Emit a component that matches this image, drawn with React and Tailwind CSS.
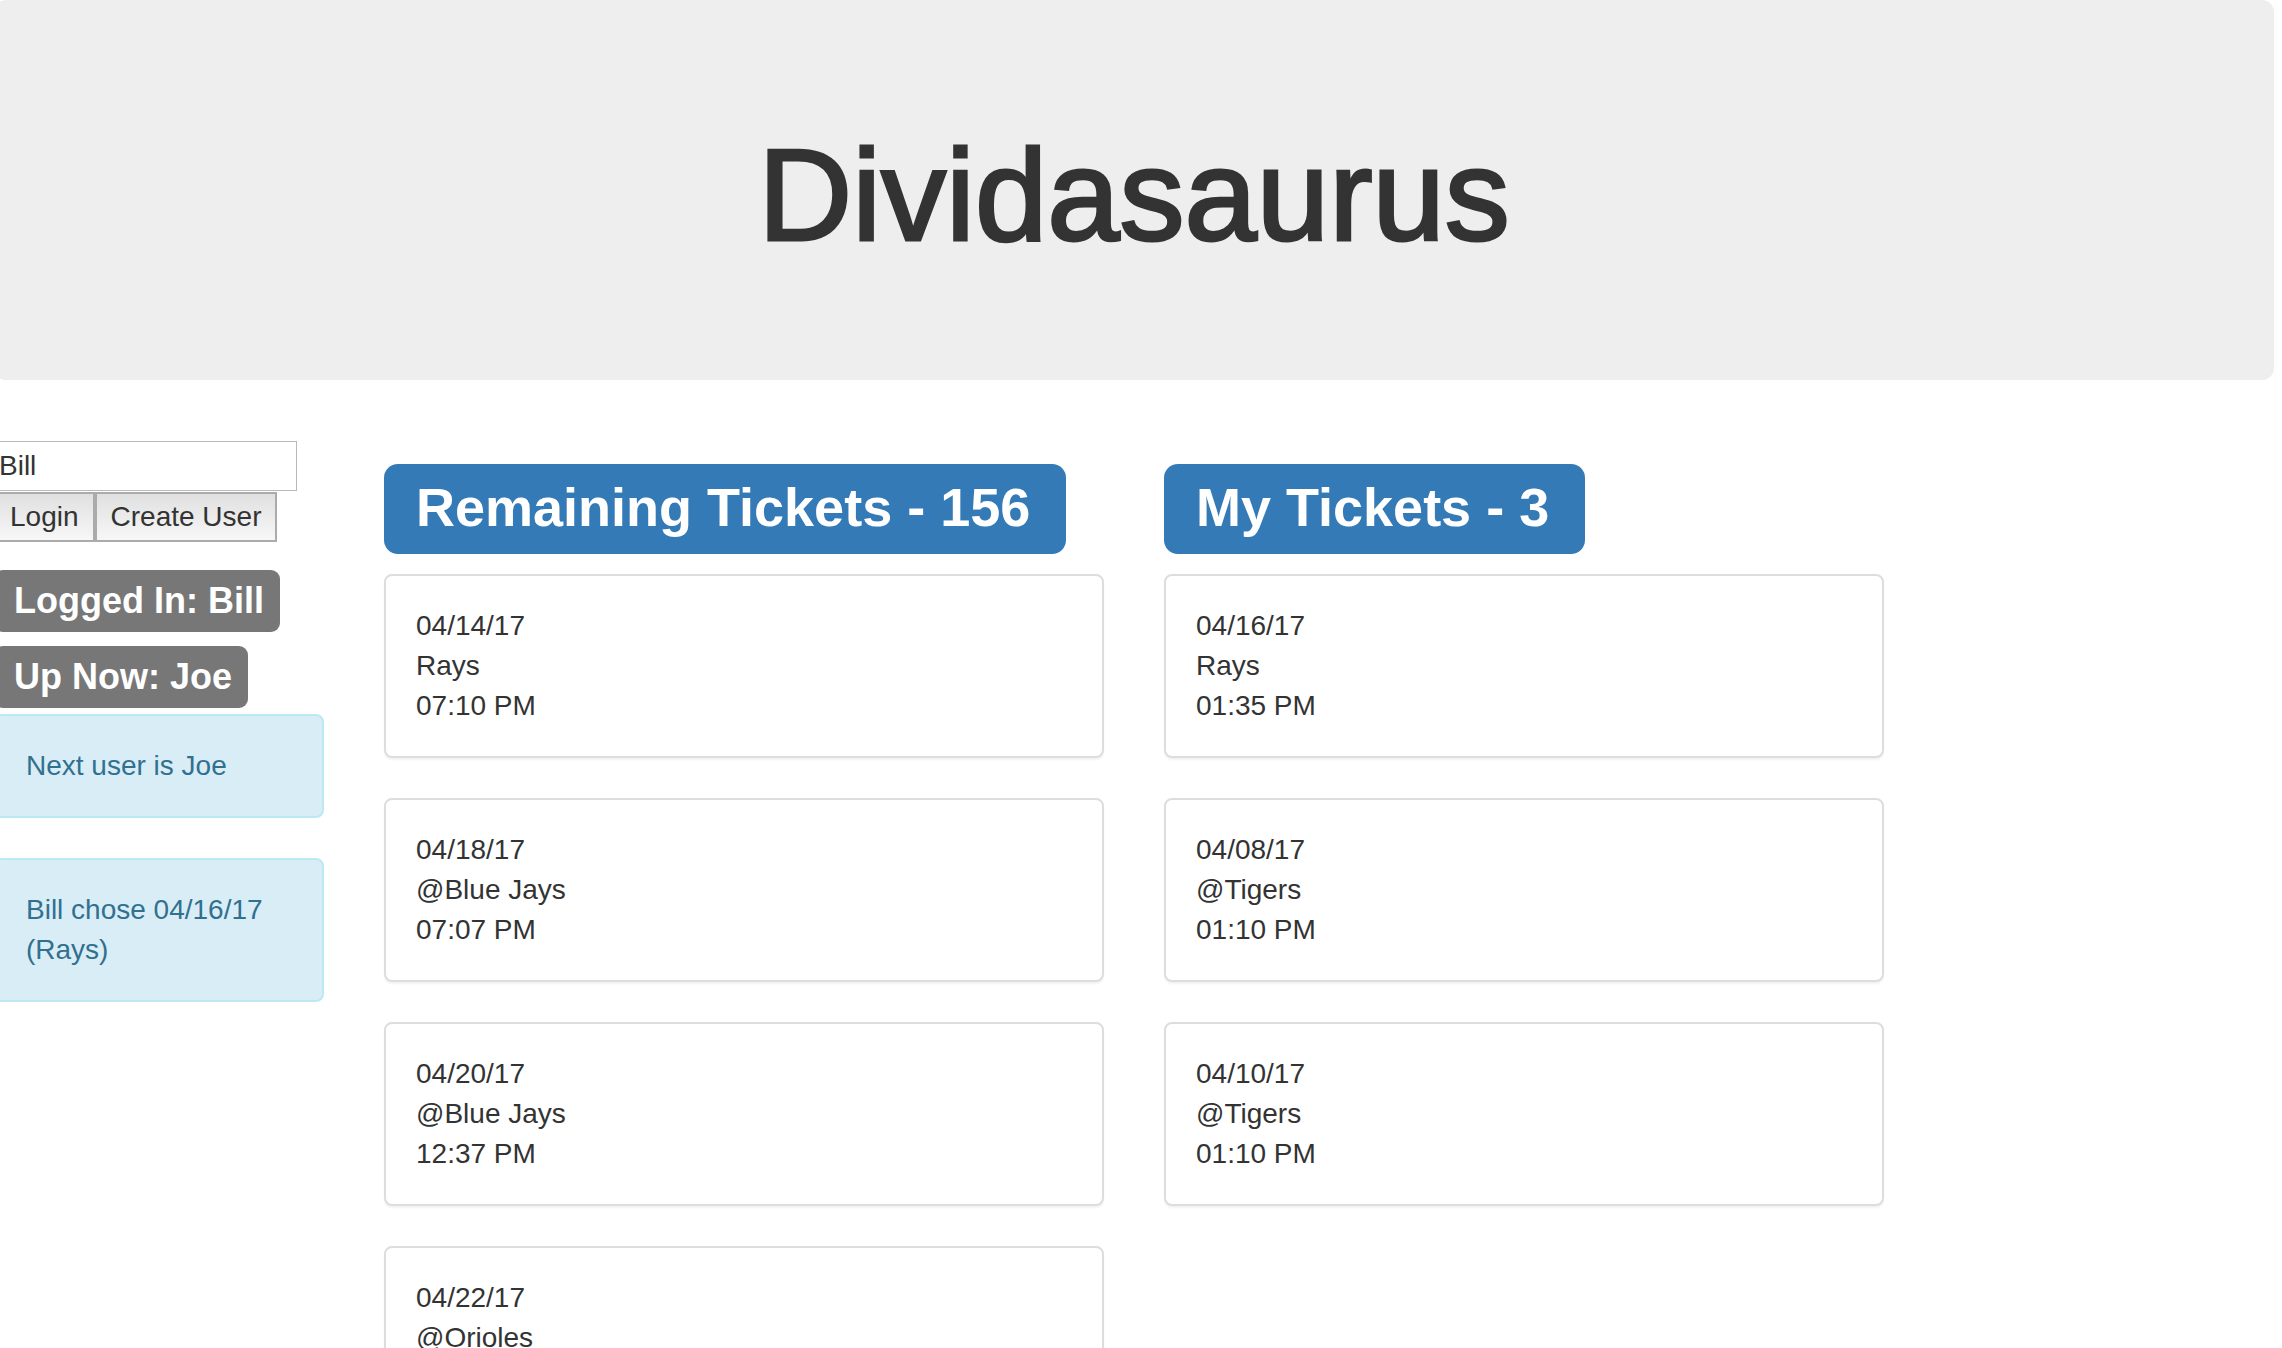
const remaining = [
  ['04/14/17', 'Rays', '07:10 PM'],
  ['04/18/17', '@Blue Jays', '07:07 PM'],
  ['04/20/17', '@Blue Jays', '12:37 PM'],
  ['04/22/17', '@Orioles'],
];

const mine = [
  ['04/16/17', 'Rays', '01:35 PM'],
  ['04/08/17', '@Tigers', '01:10 PM'],
  ['04/10/17', '@Tigers', '01:10 PM'],
];

const buttonClass =
  'h-[50px] border-2 border-[#ababab] bg-linear-to-b from-[#e0e0e0] to-[#f7f7f7] px-3.5 leading-[46px]';

function Status({ children }) {
  return (
    <h3 className="w-fit rounded-[9px] bg-[#777777] pr-4 pl-5 text-[36px] leading-[62px] font-bold whitespace-nowrap text-white">
      {children}
    </h3>
  );
}

function Notice({ children }) {
  return (
    <div className="rounded-lg border-2 border-[#bce8f1] bg-[#d9edf7] p-[30px] text-[#31708f]">
      {children}
    </div>
  );
}

function TicketColumn({ title, count, tickets }) {
  return (
    <section className="col-span-4 px-[30px] pt-[24px]">
      <h2 className="w-fit rounded-[14px] bg-[#337ab7] pr-9 pb-1 pl-8 text-[54px] leading-[86px] font-bold whitespace-nowrap text-white">
        {title} - {count}
      </h2>
      <ul className="mt-5 flex flex-col gap-10">
        {tickets.map(([date, team, time]) => (
          <li
            key={date}
            className="rounded-lg border-2 border-[#dddddd] bg-white p-[30px] shadow-[0_2px_2px_rgba(0,0,0,0.05)]"
          >
            <p>{date}</p>
            <p>{team}</p>
            {time && <p>{time}</p>}
          </li>
        ))}
      </ul>
    </section>
  );
}

export default function App() {
  return (
    <div className="h-screen overflow-hidden bg-white font-['Liberation_Sans',Arial,sans-serif] text-[28px] leading-[40px] text-[#333333]">
      <div className="mr-2 -ml-1.5">
        <header className="rounded-xl bg-[#eeeeee] pt-[126px] pb-[116px] text-center">
          <h1 className="text-[130px] leading-[138px] font-normal [-webkit-text-stroke:3px_#333333]">
            Dividasaurus
          </h1>
        </header>
        <main className="-mx-[30px] mt-[60px] grid grid-cols-12">
          <aside className="col-span-2 px-[30px] pt-px">
            <form onSubmit={(e) => e.preventDefault()}>
              <input
                type="text"
                aria-label="User name"
                defaultValue="Bill"
                className="block h-[50px] w-[303px] border border-[#b9b9b9] bg-white px-1 outline-none"
              />
              <div className="mt-px flex">
                <button type="submit" className={buttonClass}>Login</button>
                <button type="button" className={buttonClass}>Create User</button>
              </div>
            </form>
            <div className="mt-7 flex flex-col gap-3.5">
              <Status>Logged In: Bill</Status>
              <Status>Up Now: Joe</Status>
            </div>
            <div className="mt-1.5 flex flex-col gap-10">
              <Notice>Next user is Joe</Notice>
              <Notice>Bill chose 04/16/17 (Rays)</Notice>
            </div>
          </aside>
          <TicketColumn title="Remaining Tickets" count={156} tickets={remaining} />
          <TicketColumn title="My Tickets" count={3} tickets={mine} />
        </main>
      </div>
    </div>
  );
}
